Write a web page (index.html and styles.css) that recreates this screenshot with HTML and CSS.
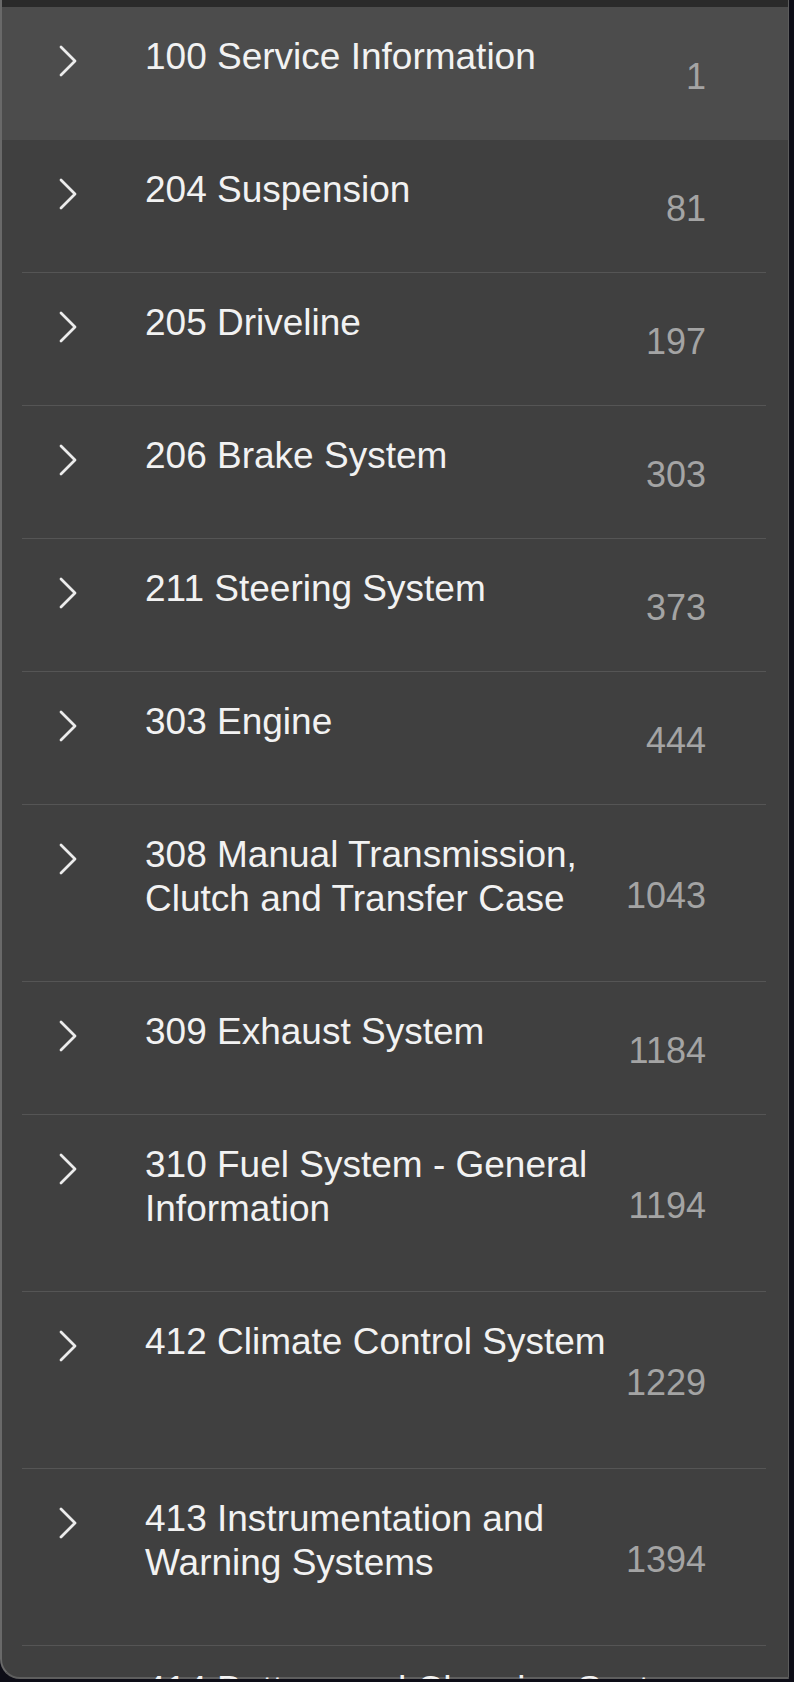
FILE: index.html
```html
<!doctype html>
<html lang="en">
<head>
  <meta charset="utf-8">
  <title>Contents</title>
  <meta name="viewport" content="width=device-width, initial-scale=1">
  <link rel="stylesheet" href="styles.css">
</head>
<body>
  <div class="panel">
    <div class="topbar"></div>

    <ul class="toc">
      <li class="entry current">
        <span class="chevron"><svg width="20" height="32" viewBox="0 0 20 32"><polyline points="3,2 17,16 3,30" /></svg></span>
        <span class="title">100 Service Information</span>
        <span class="page">1</span>
      </li>
      <li class="entry">
        <span class="chevron"><svg width="20" height="32" viewBox="0 0 20 32"><polyline points="3,2 17,16 3,30" /></svg></span>
        <span class="title">204 Suspension</span>
        <span class="page">81</span>
      </li>
      <li class="entry">
        <span class="chevron"><svg width="20" height="32" viewBox="0 0 20 32"><polyline points="3,2 17,16 3,30" /></svg></span>
        <span class="title">205 Driveline</span>
        <span class="page">197</span>
      </li>
      <li class="entry">
        <span class="chevron"><svg width="20" height="32" viewBox="0 0 20 32"><polyline points="3,2 17,16 3,30" /></svg></span>
        <span class="title">206 Brake System</span>
        <span class="page">303</span>
      </li>
      <li class="entry">
        <span class="chevron"><svg width="20" height="32" viewBox="0 0 20 32"><polyline points="3,2 17,16 3,30" /></svg></span>
        <span class="title">211 Steering System</span>
        <span class="page">373</span>
      </li>
      <li class="entry">
        <span class="chevron"><svg width="20" height="32" viewBox="0 0 20 32"><polyline points="3,2 17,16 3,30" /></svg></span>
        <span class="title">303 Engine</span>
        <span class="page">444</span>
      </li>
      <li class="entry">
        <span class="chevron"><svg width="20" height="32" viewBox="0 0 20 32"><polyline points="3,2 17,16 3,30" /></svg></span>
        <span class="title">308 Manual Transmission, Clutch and Transfer Case</span>
        <span class="page">1043</span>
      </li>
      <li class="entry">
        <span class="chevron"><svg width="20" height="32" viewBox="0 0 20 32"><polyline points="3,2 17,16 3,30" /></svg></span>
        <span class="title">309 Exhaust System</span>
        <span class="page">1184</span>
      </li>
      <li class="entry">
        <span class="chevron"><svg width="20" height="32" viewBox="0 0 20 32"><polyline points="3,2 17,16 3,30" /></svg></span>
        <span class="title">310 Fuel System - General Information</span>
        <span class="page">1194</span>
      </li>
      <li class="entry tall">
        <span class="chevron"><svg width="20" height="32" viewBox="0 0 20 32"><polyline points="3,2 17,16 3,30" /></svg></span>
        <span class="title">412 Climate Control System</span>
        <span class="page">1229</span>
      </li>
      <li class="entry">
        <span class="chevron"><svg width="20" height="32" viewBox="0 0 20 32"><polyline points="3,2 17,16 3,30" /></svg></span>
        <span class="title">413 Instrumentation and Warning Systems</span>
        <span class="page">1394</span>
      </li>
      <li class="entry peek">
        <span class="chevron"></span>
        <span class="title">414 Battery and Charging System</span>
      </li>
    </ul>
  </div>
</body>
</html>
```

FILE: styles.css
```css
html,
body {
  margin: 0;
  padding: 0;
  background: #0d0d16;
  font-family: "Liberation Sans", Arial, sans-serif;
}

.panel {
  width: 789px;
  height: 1679px;
  box-sizing: border-box;
  background: #404040;
  border-left: 2px solid #696969;
  border-right: 1px solid #5c5c5c;
  border-bottom: 2px solid #5e5e5e;
  border-bottom-left-radius: 20px;
}

.topbar {
  height: 7px;
  background: #2a2a2a;
}

.toc {
  list-style: none;
  margin: 0;
  padding: 0;
}

.entry {
  display: flex;
  margin: 0 22px 0 20px;
  border-bottom: 1px solid #555555;
}

.entry.current {
  margin: 0;
  padding: 0 22px 0 20px;
  background: #4c4c4c;
  border-bottom: 0;
}

.chevron {
  flex: none;
  width: 123px;
  padding: 38px 0 0 36px;
  box-sizing: border-box;
}

.chevron svg {
  display: block;
}

.chevron polyline {
  fill: none;
  stroke: #ececec;
  stroke-width: 2.8;
  stroke-linecap: round;
  stroke-linejoin: round;
}

.title {
  flex: 1;
  min-width: 0;
  padding: 28px 0 60px;
  color: #f2f2f2;
  font-size: 37px;
  line-height: 44px;
}

.current .title {
  padding-bottom: 61px;
}

.tall .title {
  padding-bottom: 104px;
}

.peek .title {
  padding-top: 22px;
  white-space: nowrap;
}

.page {
  flex: none;
  align-self: center;
  width: 88px;
  margin: 6px 60px 0 0;
  text-align: right;
  color: #a4a4a4;
  font-size: 36px;
  line-height: 44px;
}
```
